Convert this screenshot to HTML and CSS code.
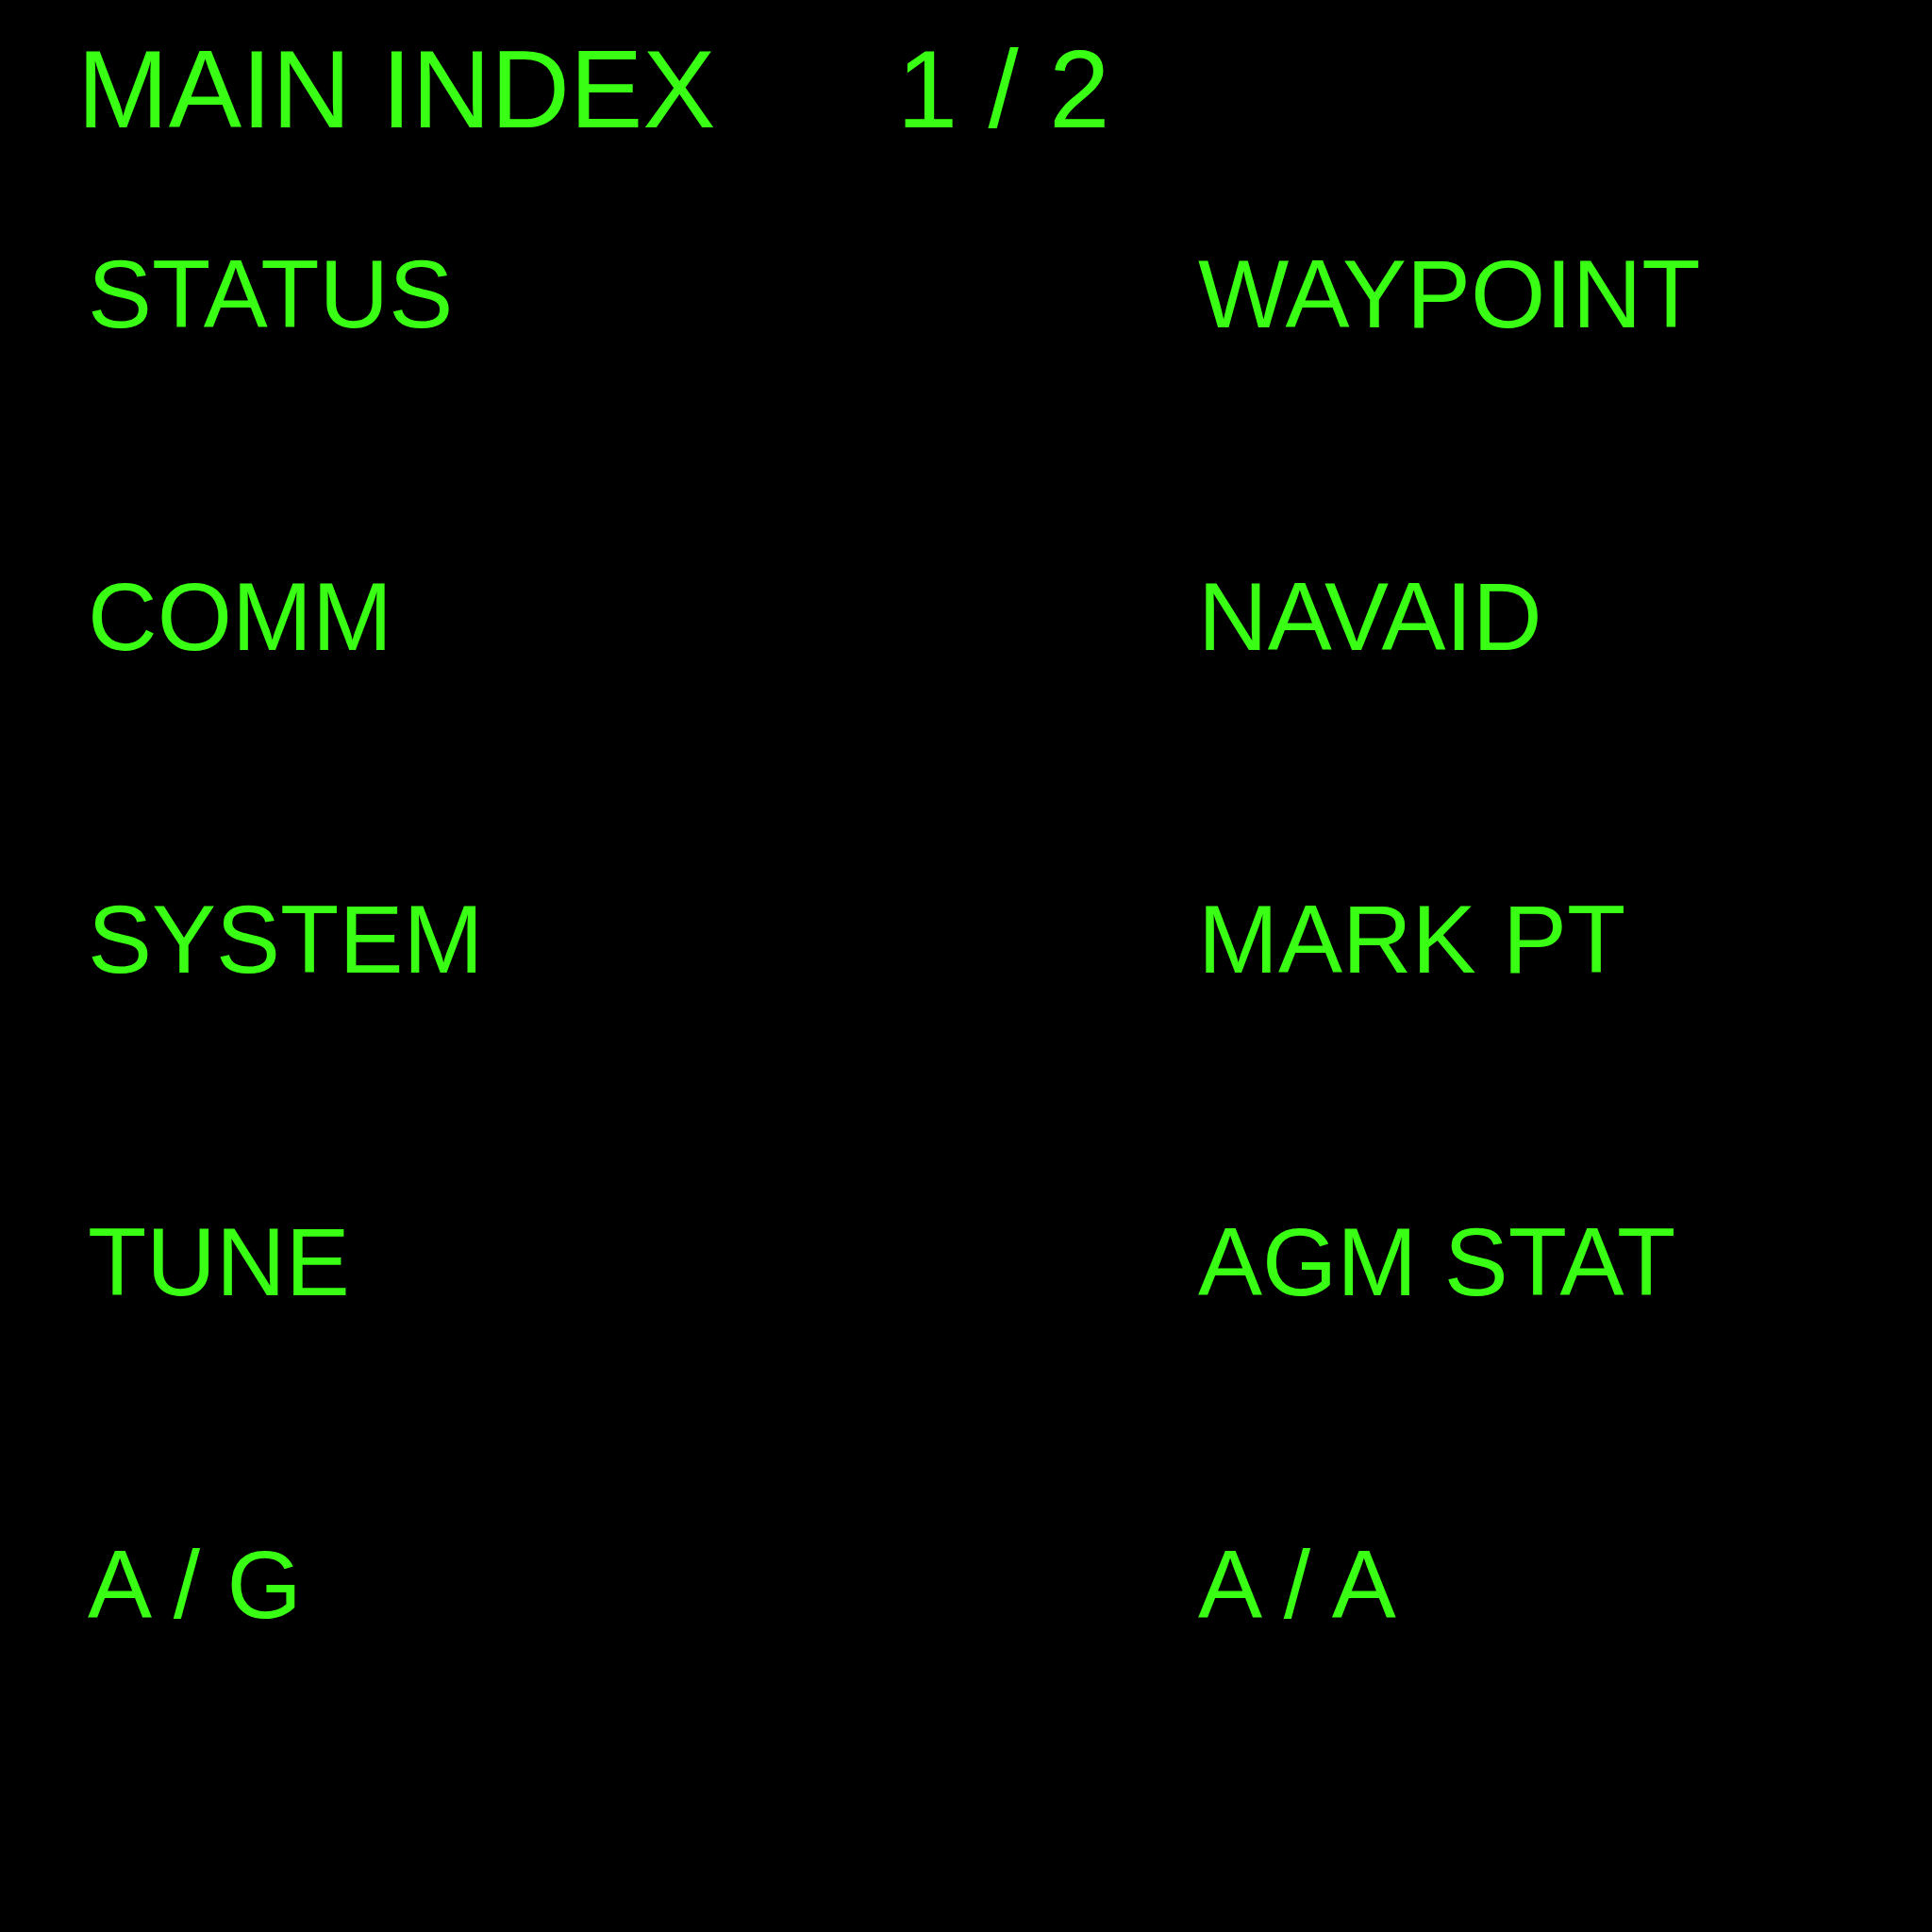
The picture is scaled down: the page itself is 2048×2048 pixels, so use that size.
FILE: index.html
```html
<!DOCTYPE html>
<html>
<head>
<meta charset="utf-8">
<link rel="stylesheet" href="styles.css">
</head>
<body>
<div class="screen">
  <header class="header">
    <span class="title">MAIN INDEX</span>
    <span class="page">1 / 2</span>
  </header>
  <div class="menu">
    <div class="item">STATUS</div>
    <div class="item">WAYPOINT</div>
    <div class="item">COMM</div>
    <div class="item">NAVAID</div>
    <div class="item">SYSTEM</div>
    <div class="item">MARK PT</div>
    <div class="item">TUNE</div>
    <div class="item">AGM STAT</div>
    <div class="item">A / G</div>
    <div class="item">A / A</div>
  </div>
</div>
</body>
</html>
```
FILE: styles.css
```css
html, body {
  margin: 0;
  padding: 0;
  background: #000;
}
body {
  width: 2048px;
  height: 2048px;
  color: #39ff14;
  font-family: "Liberation Sans", Arial, sans-serif;
}
.screen {
  padding-top: 37px;
}
.header {
  display: flex;
  align-items: baseline;
  padding-left: 82px;
  font-size: 116px;
  line-height: 1;
  white-space: nowrap;
}
.page {
  margin-left: 192px;
}
.menu {
  margin-top: 108px;
  padding-left: 93px;
  display: grid;
  grid-template-columns: 1177px 1fr;
  grid-auto-rows: 342px;
  font-size: 102px;
  line-height: 1;
}
.item {
  white-space: nowrap;
}
```
